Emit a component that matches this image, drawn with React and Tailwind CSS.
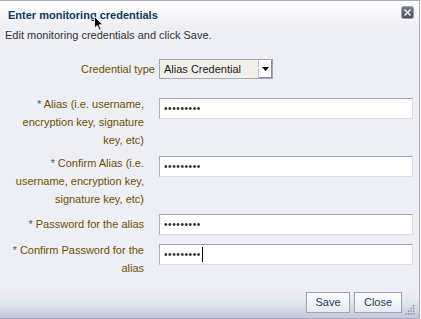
import React from "react";

const fieldBorder =
  "border border-t-[#9fa5b3] border-l-[#a9aebb] border-r-[#d9dce4] border-b-[#d9dce4] bg-white";

const Dots = () => (
  <span className="text-[10px] leading-none tracking-[0.6px] text-[#2a2a2a]">•••••••••</span>
);

const Row = ({ label, inputTop = 0, labelTop = 0, caret, className = "" }) => (
  <div className={`flex items-start ${className}`}>
    <div
      className="w-[159px] shrink-0 pl-[8px] pr-[15px] text-right text-[11px] leading-[18px] text-[#6b5000]"
      style={{ paddingTop: labelTop }}
    >
      <span className="text-[#2f5f8f]">* </span>
      {label}
    </div>
    <div
      className={`flex h-[21px] w-[254px] items-center pl-[4px] ${fieldBorder}`}
      style={{ marginTop: inputTop }}
    >
      <Dots />
      {caret && <span className="ml-px h-[15px] w-px bg-black" />}
    </div>
  </div>
);

const CloseIcon = () => (
  <svg width="13" height="13" viewBox="0 0 13 13">
    <defs>
      <linearGradient id="cg" x1="0" y1="0" x2="0" y2="1">
        <stop offset="0" stopColor="#7a7f8f" />
        <stop offset="1" stopColor="#474b5a" />
      </linearGradient>
    </defs>
    <rect x="0.5" y="0.5" width="12" height="12" rx="2" fill="url(#cg)" stroke="#9a9eae" />
    <path d="M3.5 3.5 L9.5 9.5 M9.5 3.5 L3.5 9.5" stroke="#fff" strokeWidth="1.3" />
  </svg>
);

const Grip = () => (
  <svg width="10" height="10" viewBox="0 0 10 10" fill="#8d92a8">
    <rect x="8" y="0" width="1.5" height="1.5" />
    <rect x="5.5" y="2.7" width="1.5" height="1.5" />
    <rect x="8" y="2.7" width="1.5" height="1.5" />
    <rect x="3" y="5.4" width="1.5" height="1.5" />
    <rect x="5.5" y="5.4" width="1.5" height="1.5" />
    <rect x="8" y="5.4" width="1.5" height="1.5" />
    <rect x="0.5" y="8.1" width="1.5" height="1.5" />
    <rect x="3" y="8.1" width="1.5" height="1.5" />
    <rect x="5.5" y="8.1" width="1.5" height="1.5" />
    <rect x="8" y="8.1" width="1.5" height="1.5" />
  </svg>
);

const Pointer = () => (
  <svg width="10" height="15" viewBox="0 0 10 15" className="absolute left-[94px] top-[16px]">
    <path d="M0.5 0.5 L0.5 12 L3.3 9.4 L5.3 14 L7 13.2 L5 8.8 L8.8 8.8 Z" fill="#000" stroke="#fff" strokeWidth="0.8" />
  </svg>
);

export default function App() {
  return (
    <div className="relative h-[319px] w-[421px] overflow-hidden bg-white font-['Liberation_Sans',Arial,sans-serif]">
      <div className="flex h-full w-[420px] flex-col border-y border-r border-[#a7aabd] bg-[#eeeef5]">
        <div className="flex h-[26px] shrink-0 items-start justify-between bg-gradient-to-b from-white to-[#eeeef5] pl-[8px] pr-[5px]">
          <h1 className="pt-[7px] text-[11px] font-bold leading-[14px] text-[#0e3a5c]">
            Enter monitoring credentials
          </h1>
          <div className="mt-[5px]">
            <CloseIcon />
          </div>
        </div>

        <p className="pl-[5px] text-[11px] leading-[16px] text-[#333]">
          Edit monitoring credentials and click Save.
        </p>

        <div className="mt-[16px] flex flex-col">
          <div className="flex h-[20px] items-center">
            <div className="w-[159px] shrink-0 pr-[4px] text-right text-[11px] text-[#6b5000]">
              Credential type
            </div>
            <div className="flex h-[20px] w-[114px] items-stretch border border-[#a4a8b4] bg-[#f0efea]">
              <span className="flex flex-1 items-center pl-[4px] text-[11px] text-[#1a1a1a]">
                Alias Credential
              </span>
              <span className="flex w-[14px] items-center justify-center border-l border-[#c3c6cf] bg-white shadow-[inset_-1px_-1px_0_#8a8e9a]">
                <svg width="7" height="4" viewBox="0 0 7 4">
                  <path d="M0 0 L7 0 L3.5 4 Z" fill="#000" />
                </svg>
              </span>
            </div>
          </div>

          <Row className="mt-[16px]" label="Alias (i.e. username, encryption key, signature key, etc)" inputTop={3} />
          <Row className="mt-[5px]" label="Confirm Alias (i.e. username, encryption key, signature key, etc)" inputTop={2} />
          <Row className="mt-[6px]" label="Password for the alias" labelTop={1} />
          <Row className="mt-[6px]" label="Confirm Password for the alias" inputTop={3} caret />
        </div>

        <div className="mt-auto flex h-[28px] items-start justify-end gap-[4px] bg-gradient-to-b from-[#eeeef5] via-[#e2e8ef] via-40% to-[#c3c7dc] pr-[17px] pt-[2px]">
          <button className="h-[21px] w-[44px] border border-[#9ea3b6] bg-gradient-to-b from-white to-[#e8eaf1] text-[11px] text-[#193b5c]">
            Save
          </button>
          <button className="h-[21px] w-[48px] border border-[#9ea3b6] bg-gradient-to-b from-white to-[#e8eaf1] text-[11px] text-[#193b5c]">
            Close
          </button>
        </div>
      </div>
      <div className="absolute bottom-[4px] right-[6px]">
        <Grip />
      </div>
      <Pointer />
    </div>
  );
}
